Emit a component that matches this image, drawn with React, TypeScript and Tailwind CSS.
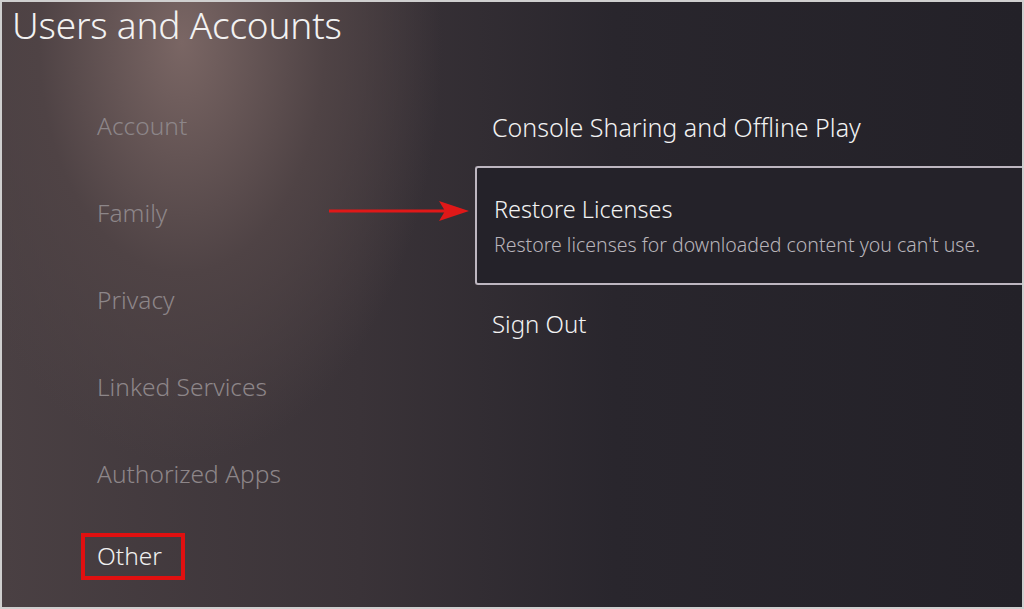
export default function App() {
  const left = ["Account", "Family", "Privacy", "Linked Services", "Authorized Apps"];
  return (
    <div className="w-[1024px] h-[609px] overflow-hidden border-2 border-[#cfcfcf] bg-[radial-gradient(ellipse_260px_420px_at_180px_40px,#7a6664_0%,#4f4345_55%,transparent_100%),linear-gradient(90deg,#4a4043_0%,#3a3338_35%,#29262d_60%,#232128_100%)] text-white font-['Open_Sans',sans-serif] font-light flex flex-col">
      <div className="pl-[10px] pt-[0px] text-[37px] leading-[46px] text-[#f2f2f2] tracking-[-0.2px]">Users and Accounts</div>
      <div className="flex flex-1">
        <div className="w-[471px] flex flex-col pt-[61px] pl-[79px] text-[24.5px]">
          {left.map((t) => (
            <div key={t} className="h-[87px] leading-[34px] pl-[16px] text-[#8d8689]">{t}</div>
          ))}
          <div className="w-[104px] h-[47px] border-[4px] border-[#e01010] flex items-center pl-[12px] text-[#f0f0f0] mt-[-11px]">Other</div>
        </div>
        <div className="flex-1 flex flex-col pt-[62px] relative">
          <div className="pl-[19px] h-[56px] text-[25px] leading-[34px] text-[#f2f2f2]">Console Sharing and Offline Play</div>
          <div className="ml-[2px] h-[119px] border-2 border-r-0 border-[#bdb6c0] rounded-l-[3px] bg-[#242229] pl-[17px] pt-[24px] flex flex-col">
            <div className="text-[23.5px] leading-[34px] text-[#f2f2f2]">Restore Licenses</div>
            <div className="text-[19.5px] leading-[26px] mt-[6px] text-[#b8b4ba]">Restore licenses for downloaded content you can't use.</div>
          </div>
          <div className="pl-[19px] mt-[22px] text-[24px] leading-[34px] text-[#f2f2f2]">Sign Out</div>
          <svg className="absolute left-[-146px] top-[151px]" width="144" height="24" viewBox="0 0 144 24">
            <line x1="2" y1="12" x2="118" y2="12" stroke="#e01818" strokeWidth="3" />
            <polygon points="112,2 142,12 112,22 118,12" fill="#e01818" />
          </svg>
        </div>
      </div>
    </div>
  );
}
